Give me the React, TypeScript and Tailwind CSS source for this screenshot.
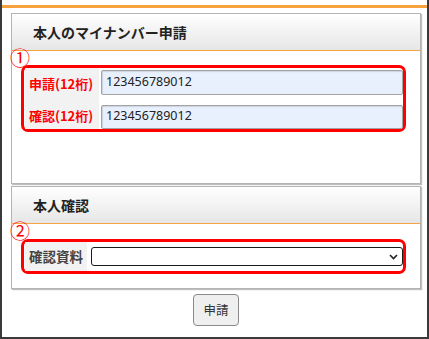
const font = "font-['Noto_Sans_CJK_JP','Noto_Sans',sans-serif]";

const panel =
  "w-[410px] border border-[#b4b4b4] bg-white shadow-[1px_1px_1px_rgba(0,0,0,0.25)]";
const panelHead =
  "flex h-[37px] items-center border-b border-[#f5a443] bg-gradient-to-b from-white to-[#e6e6e6] pl-[21px] text-[14px] font-bold text-[#222]";
const redBox = "ml-[9px] w-[385px] rounded-[7px] border-[3px] border-[#ff0000]";
const marker = "ml-[-2px] text-[20px] leading-[14px] text-[#ff0000]";

function NumberInput({ value }: { value: string }) {
  return (
    <div className="flex h-[25px] items-center rounded-[2px] border border-[#a3a3a3] bg-[#e8f0fe] pl-[4px] font-['Noto_Sans',sans-serif] text-[12.5px] text-[#222] shadow-[inset_1px_1px_1px_rgba(0,0,0,0.12)]">
      {value}
    </div>
  );
}

export default function App() {
  return (
    <div className={`${font} h-[339px] w-[429px] border-x-2 border-b-2 border-[#3a3a3a] bg-white pt-[5px]`}>
      <div className="h-[3px] bg-[#f8a23e]" />
      <div className="mt-[5px] flex flex-col items-center pl-[8px] pr-[5px]">
        {/* 本人のマイナンバー申請 */}
        <section className={panel}>
          <div className={panelHead}>本人のマイナンバー申請</div>
          <div className="h-[132px]">
            <div className={`${marker} h-[14px]`}>①</div>
            <div className={`${redBox} h-[67px]`}>
              <div className="flex h-full pl-px">
                <div className="flex w-[74px] flex-col bg-[#f2f2f2] pl-[4px] text-[13px] font-bold text-[#ff0000]">
                  <div className="flex h-[33px] items-center">申請(12桁)</div>
                  <div className="mt-[2px] flex h-[28px] items-center">確認(12桁)</div>
                </div>
                <div className="ml-[2px] flex flex-1 flex-col gap-[10px] pt-[2px]">
                  <NumberInput value="123456789012" />
                  <NumberInput value="123456789012" />
                </div>
              </div>
            </div>
          </div>
        </section>

        {/* 本人確認 */}
        <section className={`${panel} mt-[2px]`}>
          <div className={panelHead}>本人確認</div>
          <div className="h-[64px]">
            <div className={`${marker} h-[15px]`}>②</div>
            <div className={`${redBox} h-[35px]`}>
              <div className="flex h-full items-stretch pl-px">
                <div className="flex w-[62px] items-center bg-[#f2f2f2] pl-[4px] text-[13.5px] font-bold text-[#444]">
                  確認資料
                </div>
                <div className="ml-[4px] flex flex-1 items-center">
                  <div className="flex h-[19px] w-full items-center justify-end rounded-[3px] border-[1.5px] border-[#1a1a1a] bg-white pr-[4px]">
                    <svg width="9" height="6" viewBox="0 0 9 6" fill="none">
                      <path d="M1 1l3.5 3.5L8 1" stroke="#222" strokeWidth="1.6" />
                    </svg>
                  </div>
                </div>
              </div>
            </div>
          </div>
        </section>

        <button
          type="button"
          className="mt-[5px] h-[32px] w-[46px] rounded-[4px] border border-[#8a8a8a] bg-[#efefef] text-[12.5px] text-[#333]"
        >
          申請
        </button>
      </div>
    </div>
  );
}
